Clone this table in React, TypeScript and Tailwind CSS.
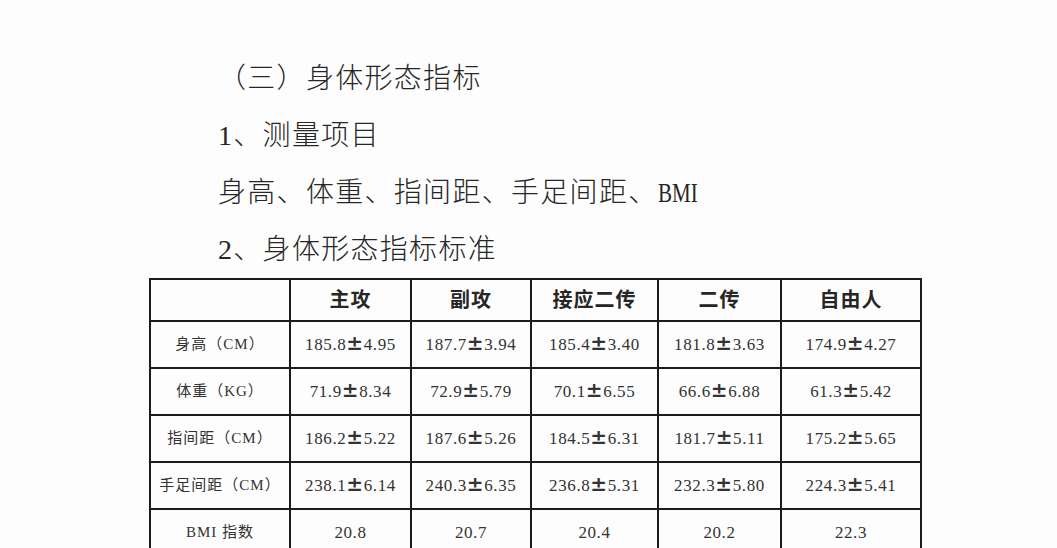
import React from "react";

const FONT = { fontFamily: '"Liberation Serif", "Noto Sans CJK SC", serif' };

const headers = ["", "主攻", "副攻", "接应二传", "二传", "自由人"];
const rows: string[][] = [
  ["身高（CM）", "185.8±4.95", "187.7±3.94", "185.4±3.40", "181.8±3.63", "174.9±4.27"],
  ["体重（KG）", "71.9±8.34", "72.9±5.79", "70.1±6.55", "66.6±6.88", "61.3±5.42"],
  ["指间距（CM）", "186.2±5.22", "187.6±5.26", "184.5±6.31", "181.7±5.11", "175.2±5.65"],
  ["手足间距（CM）", "238.1±6.14", "240.3±6.35", "236.8±5.31", "232.3±5.80", "224.3±5.41"],
  ["BMI 指数", "20.8", "20.7", "20.4", "20.2", "22.3"],
];
const widths = [140, 121, 120, 127, 123, 140];

function Val({ v }: { v: string }) {
  const parts = v.split("±");
  if (parts.length === 1) return <>{v}</>;
  return (
    <>
      {parts[0]}
      <span className="text-[20px] font-bold leading-none" style={{ fontFamily: '"DejaVu Serif", serif' }}>
        ±
      </span>
      {parts[1]}
    </>
  );
}

export default function App() {
  return (
    <div className="w-[1057px] h-[548px] overflow-hidden bg-[#fdfdfd] text-[#262626]" style={FONT}>
      <div className="pt-[50px] pl-[218px] text-[28px] leading-[57px] tracking-[1.3px] font-light">
        <div>（三）身体形态指标</div>
        <div>1、测量项目</div>
        <div>
          身高、体重、指间距、手足间距、
          <span className="inline-block origin-left scale-x-75 tracking-normal">BMI</span>
        </div>
        <div>2、身体形态指标标准</div>
      </div>
      <table className="ml-[149px] table-fixed border-collapse border-2 border-[#1c1c1c]" style={{ width: 771 }}>
        <colgroup>
          {widths.map((w, i) => (
            <col key={i} style={{ width: w }} />
          ))}
        </colgroup>
        <thead>
          <tr className="h-[42px]">
            {headers.map((h, i) => (
              <th key={i} className="border-2 border-[#1c1c1c] text-center text-[20px] font-bold tracking-[1px] p-0">
                {h}
              </th>
            ))}
          </tr>
        </thead>
        <tbody>
          {rows.map((r, ri) => (
            <tr key={ri} className="h-[47px]">
              {r.map((c, ci) => (
                <td
                  key={ci}
                  className={
                    ci === 0
                      ? "border-2 border-[#1c1c1c] text-center text-[15px] tracking-[1px] p-0 text-[#333]"
                      : "border-2 border-[#1c1c1c] text-center text-[17px] tracking-[0.6px] p-0 text-[#333]"
                  }
                >
                  {ci === 0 ? c : <Val v={c} />}
                </td>
              ))}
            </tr>
          ))}
        </tbody>
      </table>
    </div>
  );
}
